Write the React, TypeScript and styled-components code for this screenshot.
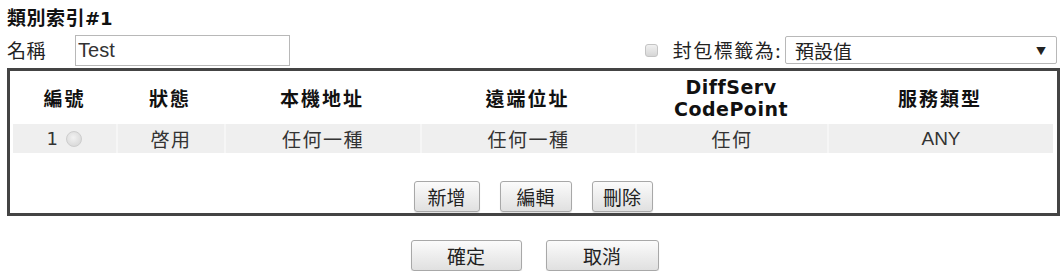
import styled, { createGlobalStyle } from "styled-components";

//GLOBAL
const GlobalStyle = createGlobalStyle`
  body {
    margin: 0;
    background: #fff;
    font-family: "Noto Sans CJK TC", "Liberation Sans", sans-serif;
    color: #222;
  }
`;

//DATA
type Rule = {
  id: number;
  status: string;
  local: string;
  remote: string;
  dscp: string;
  service: string;
};

const rules: Rule[] = [
  { id: 1, status: "啓用", local: "任何一種", remote: "任何一種", dscp: "任何", service: "ANY" },
];

const columns = "103px 108px 196px 215px 192px 1fr";

//REACT
const App = () => {
  return (
    <Page>
      <GlobalStyle />
      <Title>
        類別索引<span className="latin">#1</span>
      </Title>

      <TopRow>
        <NameField>
          <Label>名稱</Label>
          <TextInput defaultValue="Test" />
        </NameField>
        <TagField>
          <Check />
          <Label $wide>封包標籤為:</Label>
          <Select>
            <span>預設值</span>
            <span className="arrow">▼</span>
          </Select>
        </TagField>
      </TopRow>

      <Frame>
        <HeadRow>
          <HeadCell>編號</HeadCell>
          <HeadCell>狀態</HeadCell>
          <HeadCell>本機地址</HeadCell>
          <HeadCell>遠端位址</HeadCell>
          <HeadCell $latin>
            DiffServ
            <br />
            CodePoint
          </HeadCell>
          <HeadCell>服務類型</HeadCell>
        </HeadRow>

        {rules.map((r) => (
          <DataRow key={r.id}>
            <DataCell>
              <span className="num">{r.id}</span>
              <Radio />
            </DataCell>
            <DataCell>{r.status}</DataCell>
            <DataCell>{r.local}</DataCell>
            <DataCell>{r.remote}</DataCell>
            <DataCell>{r.dscp}</DataCell>
            <DataCell $latin>{r.service}</DataCell>
          </DataRow>
        ))}

        <ActionBar>
          <Button $w={66}>新增</Button>
          <Button $w={72}>編輯</Button>
          <Button $w={61}>刪除</Button>
        </ActionBar>
      </Frame>

      <FooterBar>
        <Button $w={111}>確定</Button>
        <Button $w={113}>取消</Button>
      </FooterBar>
    </Page>
  );
};

//STYLED-COMPONENTS
const Page = styled.div`
  width: 1062px;
  padding: 5px 2px 0 7px;
  box-sizing: border-box;
`;

const Title = styled.div`
  font-size: 19px;
  font-weight: 700;
  line-height: 24px;
  color: #111;
  letter-spacing: 0.5px;

  .latin {
    font-family: "DejaVu Sans", sans-serif;
    font-size: 18px;
    letter-spacing: 0;
  }
`;

const TopRow = styled.div`
  display: flex;
  align-items: center;
  justify-content: space-between;
  margin-top: 3px;
  height: 32px;
  padding-right: 3px;
`;

const NameField = styled.div`
  display: flex;
  align-items: center;
  gap: 29px;
`;

const Label = styled.span<{ $wide?: boolean }>`
  font-size: 19px;
  line-height: 24px;
  letter-spacing: ${(p) => (p.$wide ? 1.5 : 0.5)}px;
  color: #222;
`;

const TextInput = styled.input`
  width: 215px;
  height: 31px;
  box-sizing: border-box;
  border: 1px solid #b8b8b8;
  padding: 0 2px;
  font-size: 20px;
  font-family: "Liberation Sans", sans-serif;
  color: #333;
  outline: none;
`;

const TagField = styled.div`
  display: flex;
  align-items: center;
  gap: 3px;
`;

const Check = styled.span`
  width: 13px;
  height: 13px;
  box-sizing: border-box;
  border: 1px solid #c4c4c4;
  border-radius: 3px;
  background: linear-gradient(#f0f0f0, #d6d6d6);
  margin-right: 12px;
`;

const Select = styled.div`
  width: 272px;
  height: 28px;
  box-sizing: border-box;
  border: 1px solid #b8b8b8;
  border-radius: 2px;
  display: flex;
  align-items: center;
  justify-content: space-between;
  padding: 0 10px 0 9px;
  font-size: 19px;
  color: #222;

  .arrow {
    font-size: 10px;
    color: #222;
  }
`;

const Frame = styled.div`
  margin-top: 2px;
  width: 1053px;
  box-sizing: border-box;
  border: 3px solid #444;
  padding: 0 4px 1px 3px;
`;

const HeadRow = styled.div`
  display: grid;
  grid-template-columns: ${columns};
  height: 53px;
  align-items: center;
`;

const HeadCell = styled.div<{ $latin?: boolean }>`
  text-align: center;
  font-weight: 700;
  font-size: 19px;
  letter-spacing: ${(p) => (p.$latin ? 0.5 : 2)}px;
  line-height: 22px;
  color: #111;
  font-family: ${(p) =>
    p.$latin ? `"DejaVu Sans", sans-serif` : `"Noto Sans CJK TC", sans-serif`};
`;

const DataRow = styled.div`
  display: grid;
  grid-template-columns: ${columns};
  height: 29px;
  background: #efefef;
`;

const DataCell = styled.div<{ $latin?: boolean }>`
  display: flex;
  align-items: center;
  justify-content: center;
  gap: 7px;
  font-size: 19px;
  letter-spacing: ${(p) => (p.$latin ? 0 : 1.5)}px;
  color: #333;
  border-left: 2px solid #f6f6f6;
  font-family: ${(p) =>
    p.$latin ? `"Liberation Sans", sans-serif` : `"Noto Sans CJK TC", sans-serif`};

  &:first-child {
    border-left: none;
  }

  .num {
    font-family: "DejaVu Sans", sans-serif;
    font-size: 18px;
    color: #333;
  }
`;

const Radio = styled.span`
  width: 16px;
  height: 16px;
  box-sizing: border-box;
  border-radius: 50%;
  border: 1px solid #cdcdcd;
  background: radial-gradient(circle at 45% 40%, #f2f2f2, #d2d2d2);
`;

const ActionBar = styled.div`
  display: flex;
  justify-content: center;
  gap: 20px;
  margin-top: 28px;
`;

const Button = styled.button<{ $w: number }>`
  width: ${(p) => p.$w}px;
  height: 31px;
  border: 1px solid #a8a8a8;
  border-radius: 3px;
  background: linear-gradient(#fbfbfb, #e0e0e0);
  font-family: "Noto Sans CJK TC", sans-serif;
  font-size: 19px;
  line-height: 1;
  color: #222;
  padding: 0;
  box-shadow: 0 1px 1px rgba(0, 0, 0, 0.12);
`;

const FooterBar = styled.div`
  display: flex;
  justify-content: center;
  gap: 24px;
  margin-top: 24px;
  padding-left: 2px;
`;

export default App;
